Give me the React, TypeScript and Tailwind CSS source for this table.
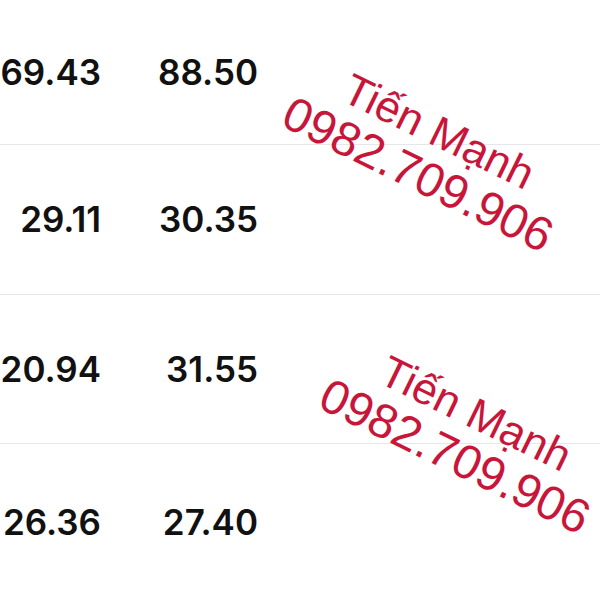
import React from "react";

const rows = [
  ["69.43", "88.50"],
  ["29.11", "30.35"],
  ["20.94", "31.55"],
  ["26.36", "27.40"],
];

const heights = ["h-[145px]", "h-[150px]", "h-[149px]", "h-[156px]"];

function Watermark({ cls }: { cls: string }) {
  return (
    <div
      className={`absolute ${cls} -translate-x-1/2 -translate-y-1/2 rotate-[26deg] text-center whitespace-nowrap text-[#c8163a] pointer-events-none`}
      style={{ fontFamily: '"Liberation Sans", Arial, sans-serif' }}
    >
      <div className="text-[44px] leading-[46px]">Tiến Mạnh</div>
      <div className="text-[48px] leading-[50px]">0982.709.906</div>
    </div>
  );
}

export default function App() {
  return (
    <div className="relative w-[600px] h-[600px] overflow-hidden bg-white">
      <div className="flex flex-col">
        {rows.map((r, i) => (
          <div
            key={i}
            className={`${heights[i]} flex items-center ${i < 3 ? "border-b border-[#e6e6eb]" : ""}`}
          >
            <div
              className="flex text-[35px] font-semibold text-[#111]"
              style={{ fontFamily: "Inter, 'Liberation Sans', sans-serif" }}
            >
              <div className="w-[101px] text-right">{r[0]}</div>
              <div className="w-[157px] text-right">{r[1]}</div>
            </div>
          </div>
        ))}
      </div>
      <Watermark cls="left-[428px] top-[154px]" />
      <Watermark cls="left-[465px] top-[436px]" />
    </div>
  );
}
